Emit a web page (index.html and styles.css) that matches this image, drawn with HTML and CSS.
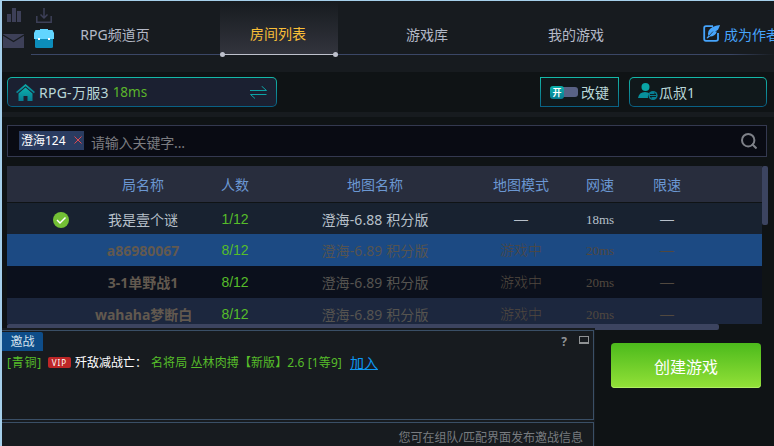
FILE: index.html
```
<!DOCTYPE html>
<html lang="zh-CN">
<head>
    <meta charset="UTF-8">
    <meta name="viewport" content="width=device-width, initial-scale=1.0">
    <title>房间列表</title>
    <link rel="stylesheet" href="styles.css">
</head>
<body>
    <div class="window">
        <header class="header">
            <div class="tools">
                <svg width="14" height="14" viewBox="0 0 14 14" fill="#3d4058"><path d="M0 6h4v8H0zM5 0h4v14H5zM10 3h4v11h-4z"/></svg>
                <svg width="16" height="15" viewBox="0 0 16 15" fill="none" stroke="#3d4058" stroke-width="1.5"><path d="M8 0v10M4.500 6.500L8 10l3.500-3.500M.8 8v6.200h14.400V8"/></svg>
                <svg width="21" height="14" viewBox="0 0 21 14"><path fill="#3d4058" d="M0 0h21v14H0z"/><path d="M0 1l10.500 6.500L21 1" fill="none" stroke="#171b1f" stroke-width="1.200"/></svg>
                <svg width="20" height="19" viewBox="0 0 20 19"><path fill="#0c8dbb" d="M1 9h18v8.500q0 1.500-1.500 1.500h-15Q1 19 1 17.500z"/><path fill="#62d5ff" d="M1.500 1H6V0h8v1h4.500L20 4v6H0V4z"/><path fill="#fff" d="M4 9h2v2H4zM14 9h2v2h-2z"/></svg>
            </div>
            <nav class="nav">
                <a class="nav-item channel">RPG频道页</a>
                <a class="nav-item active">房间列表</a>
                <a class="nav-item library">游戏库</a>
                <a class="nav-item mine">我的游戏</a>
                <a class="nav-item author">
                    <svg width="17" height="17" viewBox="0 0 17 17"><path d="M10 1.200H3Q1.200 1.200 1.200 3v11q0 1.800 1.800 1.800h10q2 0 2-1.800V8" fill="none" stroke="#46a4fb" stroke-width="1.800"/><path d="M17 0Q8 1 5.500 6 4.500 9 5.500 10.500L3.500 13l1 .5L7 11.500q5 0 7-5l-2 .2 3-2Q16.500 2 17 0z" fill="#46a4fb"/><path d="M6 11l4-4.500" stroke="#171b1f" stroke-width=".7"/></svg>
                    成为作者
                </a>
            </nav>
        </header>

        <section class="toolbar">
            <div class="box server">
                <svg width="19" height="17" viewBox="0 0 19 17"><defs><linearGradient id="teal" x2="0" y2="1"><stop stop-color="#0bb0ab"/><stop offset="1" stop-color="#087b91"/></linearGradient></defs><path fill="url(#teal)" d="M9.500 0L19 8l-1.200 1.200-8.300-7-8.300 7L0 8z"/><path fill="url(#teal)" d="M9.500 3.600l7 6V17h-5v-5h-4v5h-5V9.600z"/></svg>
                <span class="server-name">RPG-万服3</span>
                <span class="ping">18ms</span>
                <svg class="swap" width="17" height="13" viewBox="0 0 17 13" fill="none" stroke="#0da3a5"><path d="M0 4.500h16.500L11.500 0M16.500 8.500H.5l4.500 4"/></svg>
            </div>
            <div class="box keys">
                <span class="switch"><span class="knob">开</span></span>
                改键
            </div>
            <div class="box user">
                <svg width="20" height="18" viewBox="0 0 20 18"><circle cx="7.500" cy="4" r="4" fill="#0aa6a7"/><path d="M0 15q1-6 7-6 3 0 4.500 1.500-2 2-1.500 4.500z" fill="#08909c"/><circle cx="15" cy="12.500" r="4.600" fill="#087d92"/><path d="M12 11.500h6l-1.800-1.600M18 13.500h-6l1.800 1.600" fill="none" stroke="#0f1315" stroke-width=".9"/></svg>
                瓜叔1
            </div>
        </section>

        <div class="search">
            <span class="tag">澄海124<svg width="8" height="8" viewBox="0 0 8 8" stroke="#e04a50"><path d="M.5.5l7 7M7.500.5l-7 7"/></svg></span>
            <span class="placeholder">请输入关键字...</span>
            <svg class="magnifier" width="16" height="16" viewBox="0 0 16 16" fill="none" stroke="#7e8188" stroke-width="2"><circle cx="7.200" cy="7.200" r="6.200"/><path d="M11 11l4.500 4.500"/></svg>
        </div>

        <main class="rooms">
            <div class="table">
                <div class="row head">
                    <span></span><span>局名称</span><span>人数</span><span>地图名称</span><span>地图模式</span><span>网速</span><span>限速</span>
                </div>
                <div class="row open">
                    <span class="check"><svg width="16" height="16" viewBox="0 0 16 16"><circle cx="8" cy="8" r="8" fill="#73c035"/><path d="M4 8l3 3 5.500-5.500" fill="none" stroke="#fff" stroke-width="1.500"/></svg></span>
                    <span>我是壹个谜</span><span class="count">1/12</span><span class="map">澄海-6.88 积分版</span><span class="dash">—</span><span class="speed">18ms</span><span class="dash">—</span>
                </div>
                <div class="row playing selected">
                    <span></span><span class="name">a86980067</span><span class="count">8/12</span><span class="map">澄海-6.89 积分版</span><span class="mode">游戏中</span><span class="speed">20ms</span><span class="dash">—</span>
                </div>
                <div class="row playing">
                    <span></span><span class="name">3-1单野战1</span><span class="count">8/12</span><span class="map">澄海-6.89 积分版</span><span class="mode">游戏中</span><span class="speed">20ms</span><span class="dash">—</span>
                </div>
                <div class="row playing alt">
                    <span></span><span class="name">wahaha梦断白</span><span class="count">8/12</span><span class="map">澄海-6.89 积分版</span><span class="mode">游戏中</span><span class="speed">20ms</span><span class="dash">—</span>
                </div>
            </div>
            <div class="scroll-y"></div>
            <div class="scroll-x"></div>
        </main>

        <footer class="bottom">
            <div class="chat">
                <div class="chat-log">
                    <div class="chat-bar">
                        <span class="chat-tab">邀战</span>
                        <span class="help">?</span>
                        <span class="minimize"></span>
                    </div>
                    <div class="message">
                        <span class="rank">[青铜]</span>
                        <span class="vip">VIP</span>
                        <span class="sender">歼敌减战亡：</span>
                        <span class="invite">名将局 丛林肉搏【新版】2.6 [1等9]</span>
                        <a class="join" href="#">加入</a>
                    </div>
                </div>
                <div class="chat-input">您可在组队/匹配界面发布邀战信息</div>
            </div>
            <button class="create">创建游戏</button>
        </footer>
    </div>
</body>
</html>
```
FILE: styles.css
```
* {
    box-sizing: border-box;
}
body {
    margin: 0;
    overflow: hidden;
    font-family: "Noto Sans", "Noto Sans CJK SC", sans-serif;
    font-size: 14px;
    background: #0f1315;
}
.window {
    width: 774px;
    height: 446px;
    overflow: hidden;
    border-top: 1px solid #a5cfea;
    border-left: 2px solid #a5cfea;
    white-space: nowrap;
}
.header {
    display: flex;
    height: 71px;
    background: #171b1f;
}
.tools {
    display: grid;
    grid-template-columns: 27px 27px;
    grid-template-rows: 16px 19px;
    row-gap: 6px;
    width: 54px;
    height: 53px;
    padding-top: 6px;
    align-items: end;
    justify-items: center;
}
.tools svg:nth-child(1),
.tools svg:nth-child(3) {
    justify-self: start;
}
.tools svg:nth-child(1) {
    margin-left: 5px;
    margin-bottom: 1px;
}
.tools svg:nth-child(2),
.tools svg:nth-child(4) {
    margin-left: 3px;
}
.tools svg:nth-child(3) {
    margin-left: 1px;
}
.nav {
    display: flex;
    width: 743px;
    height: 54px;
    margin-left: -25px;
    flex-shrink: 0;
    border-bottom: 1px solid;
    border-image: linear-gradient(90deg, #3b4766 94%, #171b1f 100%) 1;
}
.nav-item {
    position: relative;
    display: flex;
    align-items: center;
    justify-content: center;
    flex-shrink: 0;
    height: 54px;
    padding-top: 11px;
    color: #b4b9c7;
}
.channel {
    width: 168px;
    margin-right: 21px;
}
.active {
    width: 118px;
    padding-right: 2px;
    color: #f9bf38;
    background: linear-gradient(#171b1f, #32343d);
    border-bottom: 1px solid #bec1cc;
}
.active::before,
.active::after {
    content: "";
    position: absolute;
    bottom: -3px;
    width: 5px;
    height: 5px;
    border-radius: 50%;
    background: #bec1cc;
}
.active::before {
    left: 0;
}
.active::after {
    right: 0;
}
.library {
    width: 178px;
}
.mine {
    width: 120px;
}
.author {
    gap: 4px;
    margin-left: 67px;
    color: #46a4fb;
}
.toolbar {
    display: flex;
    height: 45px;
    padding: 5px 7px 10px 5px;
    background: #0f1315;
    border-bottom: 5px solid #171b1f;
}
.box {
    display: flex;
    align-items: center;
    height: 30px;
    color: #b9d7d8;
    border: 1px solid transparent;
    background: linear-gradient(#10181b, #10181b) padding-box, linear-gradient(#14baa9, #095f84) border-box;
}
.server {
    width: 270px;
    padding: 0 9px 0 8px;
    border-radius: 5px;
    background: linear-gradient(#1b2031, #1b2031) padding-box, linear-gradient(#14baa9, #095f84) border-box;
}
.server-name {
    margin: 0 4px 0 4px;
    letter-spacing: 0.25px;
}
.ping {
    color: #5bb52b;
    font-size: 13.5px;
}
.swap {
    margin-left: auto;
}
.keys {
    width: 79px;
    margin-left: 263px;
    padding-left: 9px;
    gap: 3px;
}
.switch {
    display: flex;
    align-items: center;
    width: 28px;
    height: 10px;
    border-radius: 3px;
    background: #586285;
}
.knob {
    width: 14px;
    height: 13px;
    border-radius: 3px;
    background: linear-gradient(#0bb0ab, #087b91);
    color: #fff;
    font-size: 9px;
    font-weight: bold;
    line-height: 13px;
    text-align: center;
}
.user {
    width: 138px;
    margin-left: 10px;
    padding-left: 8px;
    gap: 1px;
    border-radius: 5px;
}
.search {
    display: flex;
    align-items: center;
    width: 760px;
    height: 32px;
    margin: 8px 0 9px 5px;
    padding: 0 9px 0 11px;
    border: 1px solid #343950;
    background: #090b13;
}
.tag {
    display: flex;
    align-items: center;
    justify-content: space-between;
    width: 65px;
    height: 19px;
    margin-bottom: 2px;
    padding: 0 2px;
    background: #2a3c61;
    color: #fff;
    font-size: 12px;
}
.placeholder {
    margin: 2px 0 0 7px;
    color: #7b7c80;
    letter-spacing: -0.15px;
}
.magnifier {
    margin-left: auto;
    margin-bottom: 1px;
}
.rooms {
    display: grid;
    grid-template-columns: 755px 6px;
    grid-template-rows: 158px 6px;
    height: 162px;
    margin-left: 5px;
}
.table {
    overflow: hidden;
}
.row {
    display: grid;
    grid-template-columns: 88px 96px 88px 192px 100px 58px 76px;
    height: 32px;
    line-height: 33px;
    text-align: center;
    background: #0b101c;
}
.row.head {
    height: 37px;
    line-height: 38px;
    color: #6b97d2;
    background: #282d3d;
    border-bottom: 1px solid #0f1315;
}
.row.open {
    height: 31px;
    color: #b7c0ca;
    background: #182230;
}
.row.playing {
    color: #565450;
}
.row.selected {
    background: #1c4a83;
}
.row.alt {
    background: #1c273e;
}
.check {
    display: flex;
    align-items: center;
    justify-content: flex-end;
    padding-right: 26px;
}
.name {
    font-weight: bold;
    color: #62594f;
}
.map {
    letter-spacing: 0.1px;
}
.row .count {
    font-family: "Liberation Sans", sans-serif;
    color: #56bd2a;
}
.mode {
    font-family: "Noto Sans CJK SC", sans-serif;
    font-weight: 300;
    line-height: 31px;
}
.row.playing .mode,
.row.playing .speed,
.row.playing .dash {
    color: #51483f;
}
.speed {
    font-family: "Liberation Serif", serif;
    font-size: 13px;
}
.dash {
    font-family: "Liberation Sans", sans-serif;
}
.scroll-y {
    height: 59px;
    border-radius: 2px;
    background: #3c4460;
}
.scroll-x {
    width: 712px;
    border-radius: 2px;
    background: #3c4460;
}
.bottom {
    display: flex;
    align-items: flex-start;
}
.chat {
    position: relative;
    z-index: 1;
    width: 593px;
    padding: 2px 1px 0 0;
    background: #171b1f;
    font-size: 12px;
}
.chat-log {
    height: 90px;
    border: solid #3a4f66;
    border-width: 1px 1px 1px 0;
}
.chat-bar {
    display: flex;
    align-items: center;
    padding: 1px 4px 0 0;
}
.chat-tab {
    width: 41px;
    height: 19px;
    border-radius: 0 2px 0 0;
    background: #0e4d89;
    color: #d5e2ee;
    line-height: 19px;
    text-align: center;
}
.help {
    margin-left: auto;
    margin-right: 12px;
    color: #8f9294;
    font-weight: bold;
    line-height: 17px;
}
.minimize {
    width: 10px;
    height: 8px;
    margin-bottom: 3px;
    border: 1px solid #8f9294;
    border-bottom-width: 2px;
}
.message {
    display: flex;
    align-items: center;
    height: 22px;
    padding-left: 5px;
    color: #56bd2a;
}
.rank {
    width: 37px;
    letter-spacing: 0.8px;
}
.vip {
    display: flex;
    align-items: center;
    justify-content: center;
    width: 23px;
    height: 11px;
    margin-left: 4px;
    border-radius: 2px;
    background: #bd2627;
    color: #fff;
    font-size: 8px;
    letter-spacing: 1px;
}
.sender {
    width: 72px;
    margin-left: 4px;
    color: #fff;
}
.invite {
    margin-left: 4px;
    letter-spacing: 0.1px;
}
.join {
    margin-left: 8px;
    color: #0d97f2;
    font-size: 14px;
}
.chat-input {
    height: 28px;
    margin-top: 2px;
    padding: 3px 10px 0 0;
    border: solid #3a4f66;
    border-width: 1px 1px 0 0;
    color: #777b7f;
    line-height: 24px;
    text-align: right;
}
.create {
    width: 150px;
    height: 45px;
    margin: 15px 0 0 16px;
    padding: 0;
    border: none;
    border-radius: 4px;
    background: linear-gradient(#4cba1c, #93e138);
    box-shadow: inset 0 -1px #b0ef62;
    color: #fff;
    font-family: inherit;
    font-size: 16px;
}
```
